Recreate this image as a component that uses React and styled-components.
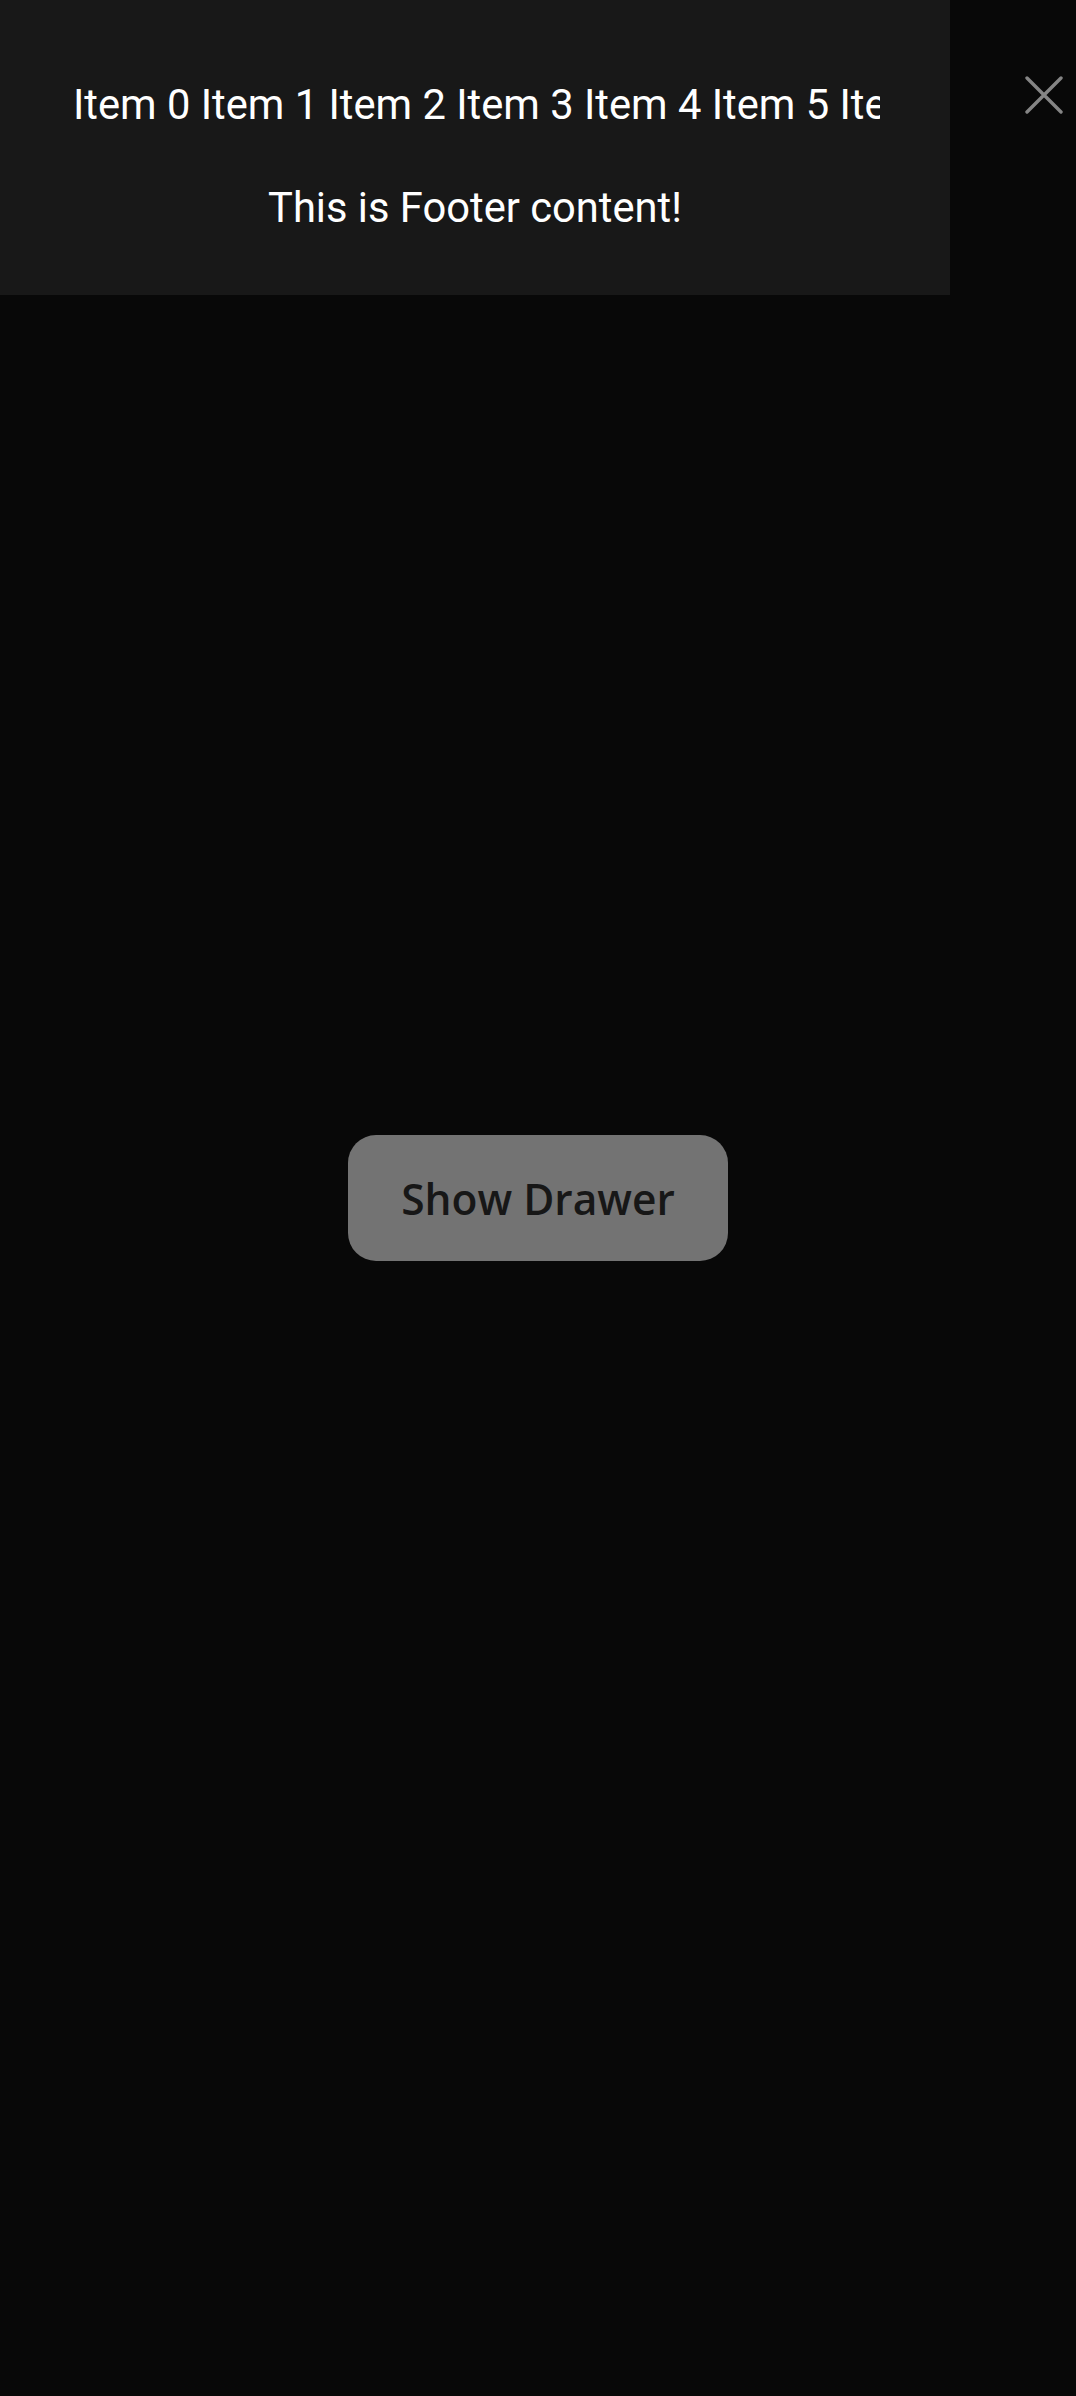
import React from "react";
import styled, { createGlobalStyle } from "styled-components";

const GlobalStyle = createGlobalStyle`
  html, body {
    margin: 0;
    padding: 0;
    background: #080808;
  }
  * { box-sizing: border-box; }
`;

const Screen = styled.div`
  position: relative;
  width: 1076px;
  height: 2396px;
  background: #080808;
  display: flex;
  align-items: center;
  justify-content: center;
  overflow: hidden;
`;

const ShowButton = styled.button`
  width: 380px;
  height: 126px;
  border: none;
  border-radius: 28px;
  background: #737373;
  color: #171717;
  font-family: "Open Sans", "Noto Sans", sans-serif;
  font-weight: 600;
  font-size: 42.5px;
  display: flex;
  align-items: center;
  justify-content: center;
  padding: 0;
  cursor: pointer;
`;

const Drawer = styled.div`
  position: absolute;
  top: 0;
  left: 0;
  width: 950px;
  height: 295px;
  background: #181818;
  display: flex;
  flex-direction: column;
  align-items: center;
  padding-top: 81px;
  gap: 55px;
  font-family: Roboto, "Noto Sans", sans-serif;
  color: #ffffff;
`;

const ScrollRow = styled.div`
  width: 100%;
  padding: 0 70px 0 73px;
`;

const ScrollInner = styled.div`
  width: 100%;
  overflow: hidden;
  white-space: nowrap;
  font-size: 41.7px;
  line-height: 48px;
`;

const Footer = styled.div`
  font-size: 41.7px;
  line-height: 48px;
  text-align: center;
`;

const CloseButton = styled.button`
  position: absolute;
  top: 76px;
  left: 1025px;
  width: 38px;
  height: 38px;
  padding: 0;
  border: none;
  background: transparent;
  display: flex;
  align-items: center;
  justify-content: center;
`;

const items = Array.from({ length: 20 }, (_, i) => `Item ${i}`).join(" ");

export default function App() {
  return (
    <>
      <GlobalStyle />
      <Screen>
        <ShowButton>Show Drawer</ShowButton>
        <Drawer>
          <ScrollRow>
            <ScrollInner>{items}</ScrollInner>
          </ScrollRow>
          <Footer>This is Footer content!</Footer>
        </Drawer>
        <CloseButton aria-label="close">
          <svg width="38" height="38" viewBox="0 0 38 38">
            <path d="M2 2 L36 36 M36 2 L2 36" stroke="#858585" strokeWidth="3.4" strokeLinecap="round" />
          </svg>
        </CloseButton>
      </Screen>
    </>
  );
}
